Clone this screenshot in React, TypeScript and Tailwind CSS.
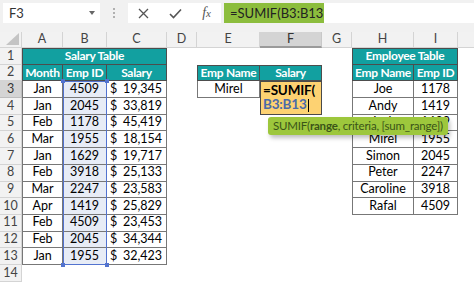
import React from "react";

const TEAL = "bg-[#12a0a0] text-white font-bold text-[12px] tracking-[-0.3px]";

function Cell({ cls, children }: { cls: string; children?: React.ReactNode }) {
  return <div className={"flex items-center overflow-hidden whitespace-nowrap " + cls}>{children}</div>;
}

const rh = "justify-center bg-[#f2f2f2] text-[#444] border-r border-b border-[#d4d4d4]";
const rhSel = "justify-center bg-[#d4d4d4] text-[#333] border-r border-b border-[#bdbdbd]";
const blank = "bg-white";
const th = "justify-center " + TEAL + " border-r border-b border-[#4d4d4d]";
const td = "justify-center bg-white text-black border-r border-b border-[#777]";
const tdSel = "justify-center bg-[#e7ecf6] text-black border-r border-b border-[#777]";

const salary: [string, string, string][] = [
  ["Jan", "4509", "19,345"],
  ["Jan", "2045", "33,819"],
  ["Feb", "1178", "45,419"],
  ["Mar", "1955", "18,154"],
  ["Jan", "1629", "19,717"],
  ["Feb", "3918", "25,133"],
  ["Mar", "2247", "23,583"],
  ["Apr", "1419", "25,829"],
  ["Feb", "4509", "23,453"],
  ["Feb", "2045", "34,344"],
  ["Jan", "1955", "32,423"],
];

const emps: [string, string][] = [
  ["Joe", "1178"],
  ["Andy", "1419"],
  ["Jack", "1629"],
  ["Mirel", "1955"],
  ["Simon", "2045"],
  ["Peter", "2247"],
  ["Caroline", "3918"],
  ["Rafal", "4509"],
];

export default function App() {
  const rows: React.ReactNode[] = [];
  const letters = ["A", "B", "C", "D", "E", "F", "G", "H", "I"];
  rows.push(
    <div key="corner" className="relative bg-[#f2f2f2] border-r border-b border-[#d4d4d4]">
      <svg className="absolute right-[2px] bottom-[2px]" width="13" height="12" viewBox="0 0 13 12">
        <polygon points="13,0 13,12 0,12" fill="#c4c4c4" />
      </svg>
    </div>
  );
  letters.forEach((l) => {
    rows.push(
      <Cell
        key={"h" + l}
        cls={
          l === "F"
            ? "justify-center bg-[#d4d4d4] text-[#333] border-r border-b-2 border-b-[#9a9a9a] border-r-[#c8c8c8]"
            : "justify-center bg-[#f2f2f2] text-[#444] border-r border-b border-[#d4d4d4]"
        }
      >
        {l}
      </Cell>
    );
  });
  rows.push(<div key="hpad" className="bg-[#f2f2f2] border-b border-[#d4d4d4]" />);

  rows.push(<Cell key="r1" cls={rh}>1</Cell>);
  rows.push(
    <Cell key="r1a" cls={"col-span-3 border-l border-t " + th}>
      Salary Table
    </Cell>
  );
  rows.push(<div key="r1d" className={blank} />, <div key="r1e" className={blank} />, <div key="r1f" className={blank} />, <div key="r1g" className={blank} />);
  rows.push(
    <Cell key="r1h" cls={"col-span-2 border-l border-t " + th}>
      Employee Table
    </Cell>
  );
  rows.push(<div key="r1p" className={blank} />);

  rows.push(<Cell key="r2" cls={rh}>2</Cell>);
  rows.push(<Cell key="r2a" cls={"border-l " + th}>Month</Cell>);
  rows.push(<Cell key="r2b" cls={th}>Emp ID</Cell>);
  rows.push(<Cell key="r2c" cls={th}>Salary</Cell>);
  rows.push(<div key="r2d" className={blank} />);
  rows.push(<Cell key="r2e" cls={"border-l border-t " + th}>Emp Name</Cell>);
  rows.push(<Cell key="r2f" cls={"border-t " + th}>Salary</Cell>);
  rows.push(<div key="r2g" className={blank} />);
  rows.push(<Cell key="r2h" cls={"border-l " + th}>Emp Name</Cell>);
  rows.push(<Cell key="r2i" cls={th}>Emp ID</Cell>);
  rows.push(<div key="r2p" className={blank} />);

  for (let i = 0; i < 12; i++) {
    const n = i + 3;
    const s = salary[i];
    const e = emps[i];
    rows.push(
      <Cell key={"rh" + n} cls={n === 3 ? rhSel : rh}>
        {n}
      </Cell>
    );
    if (s) {
      rows.push(<Cell key={"a" + n} cls={"border-l " + td}>{s[0]}</Cell>);
      rows.push(<Cell key={"b" + n} cls={tdSel}>{s[1]}</Cell>);
      rows.push(
        <Cell key={"c" + n} cls={"justify-between pl-[3px] pr-[4px] bg-white text-black border-r border-b border-[#777]"}>
          <span>$</span>
          <span>{s[2]}</span>
        </Cell>
      );
    } else {
      rows.push(<div key={"a" + n} className={blank} />, <div key={"b" + n} className={blank} />, <div key={"c" + n} className={blank} />);
    }
    rows.push(<div key={"d" + n} className={blank} />);
    if (n === 3) {
      rows.push(<Cell key={"e" + n} cls={"border-l " + td}>Mirel</Cell>);
      rows.push(<Cell key={"f" + n} cls={td}></Cell>);
    } else {
      rows.push(<div key={"e" + n} className={blank} />, <div key={"f" + n} className={blank} />);
    }
    rows.push(<div key={"g" + n} className={blank} />);
    if (e) {
      rows.push(<Cell key={"h" + n} cls={"border-l " + td}>{e[0]}</Cell>);
      rows.push(<Cell key={"i" + n} cls={td}>{e[1]}</Cell>);
    } else {
      rows.push(<div key={"h" + n} className={blank} />, <div key={"i" + n} className={blank} />);
    }
    rows.push(<div key={"p" + n} className={blank} />);
  }

  return (
    <div className="w-[474px] h-[282px] overflow-hidden bg-white font-['Lato','Noto_Sans',sans-serif] text-[12.5px] leading-none">
      <div className="h-[32px] bg-[#f1f1f1] flex items-start pt-[3px]">
        <div className="ml-[3px] w-[97px] h-[20px] bg-white flex items-center justify-between pl-[6px] pr-[5px] text-[13px] text-[#333]">
          <span>F3</span>
          <svg width="6" height="4" viewBox="0 0 6 4">
            <polygon points="0,0 6,0 3,4" fill="#666" />
          </svg>
        </div>
        <div className="w-[28px] h-[20px] flex flex-col items-center justify-center gap-[2px]">
          <span className="w-[2px] h-[2px] bg-[#b0b0b0]" />
          <span className="w-[2px] h-[2px] bg-[#b0b0b0]" />
          <span className="w-[2px] h-[2px] bg-[#b0b0b0]" />
        </div>
        <div className="w-[93px] h-[20px] bg-white flex items-center justify-between pl-[10px] pr-[10px]">
          <svg width="11" height="11" viewBox="0 0 11 11">
            <path d="M1 1 L10 10 M10 1 L1 10" stroke="#555" strokeWidth="1.3" />
          </svg>
          <svg width="13" height="11" viewBox="0 0 13 11">
            <path d="M1 6 L4.5 9.5 L12 1.5" stroke="#555" strokeWidth="1.6" fill="none" />
          </svg>
          <span className="font-['Liberation_Serif',serif] italic text-[14px] text-[#555]">
            f<span className="text-[11px]">x</span>
          </span>
        </div>
        <div className="ml-[3px] flex-1 h-[20px] bg-white flex">
          <div className="w-[100px] h-full bg-[#8cbd3d] flex items-center pl-[6px] text-[13px] text-[#222]">
            =SUMIF(B3:B13
          </div>
        </div>
      </div>

      <div className="relative grid grid-cols-[22px_41px_44px_60px_30px_63px_62px_30px_62px_44px_16px] grid-rows-[16px_repeat(14,16.7px)]">
        {rows}

        <div className="absolute inset-0 col-start-3 col-end-4 row-start-4 row-end-15 border-[1.5px] border-[#5273cf] pointer-events-none">
          <span className="absolute -left-[3px] -top-[3px] w-[4px] h-[4px] bg-[#5273cf]" />
          <span className="absolute -right-[3px] -top-[3px] w-[4px] h-[4px] bg-[#5273cf]" />
          <span className="absolute -left-[3px] -bottom-[3px] w-[4px] h-[4px] bg-[#5273cf]" />
          <span className="absolute -right-[3px] -bottom-[3px] w-[4px] h-[4px] bg-[#5273cf]" />
        </div>

        <div className="absolute inset-0 col-start-7 col-end-8 row-start-4 row-end-6 bg-[#fdd272] border border-[#4a4a4a] flex flex-col justify-between pl-[2px] pt-[2px] pb-[2px] text-[13.5px] font-bold tracking-[-0.2px]">
          <span className="text-black">=SUMIF(</span>
          <span className="text-[#4a6aa8]">
            B3:B13<span className="inline-block w-[1px] h-[13px] bg-black align-middle ml-[1px]" />
          </span>
        </div>

        <div className="absolute left-[268px] top-[85px] w-[180px] h-[18px] rounded-[3px] bg-[#9dc73c] shadow-[2px_3px_4px_rgba(0,0,0,0.25)] flex items-center pl-[5px] text-[11.5px] tracking-[-0.2px] text-[#3a5418] whitespace-nowrap">
          SUMIF(<b>range</b>, criteria, [sum_range])
        </div>
      </div>
    </div>
  );
}
